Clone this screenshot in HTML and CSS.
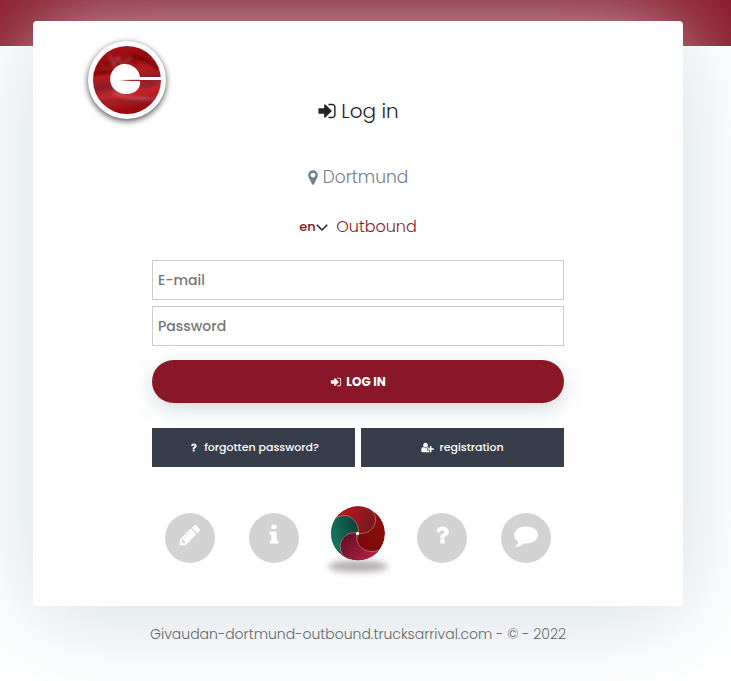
FILE: index.html
```html
<!DOCTYPE html>
<html lang="en">
<head>
    <meta charset="UTF-8">
    <meta name="viewport" content="width=device-width, initial-scale=1.0">
    <title>Log in</title>
    <link rel="stylesheet" href="styles.css">
</head>
<body>
    <svg class="sprite" aria-hidden="true">
        <symbol id="sign-in" viewBox="0 0 1792 1792"><path d="M1312 896q0 26-19 45l-544 544q-19 19-45 19t-45-19-19-45v-288h-448q-26 0-45-19t-19-45v-384q0-26 19-45t45-19h448v-288q0-26 19-45t45-19 45 19l544 544q19 19 19 45zm352-352v704q0 119-84.500 203.500t-203.500 84.500h-320q-13 0-22.500-9.500t-9.500-22.500q0-4-1-20t-.5-26.500 3-23.500 10-19.500 20.500-6.500h320q66 0 113-47t47-113v-704q0-66-47-113t-113-47h-312l-11.500-1-11.500-3-8-5.500-7-9-2-13.500q0-4-1-20t-.5-26.500 3-23.500 10-19.500 20.500-6.500h320q119 0 203.500 84.500t84.500 203.500z"/></symbol>
        <symbol id="question" viewBox="0 0 1792 1792"><path d="M1088 1256v240q0 16-12 28t-28 12h-240q-16 0-28-12t-12-28v-240q0-16 12-28t28-12h240q16 0 28 12t12 28zm316-600q0 54-15.500 101t-35 76.500-55 59.500-57.500 43.500-61 35.500q-41 23-68.500 65t-27.500 67q0 17-12 32.500t-28 15.500h-240q-15 0-25.500-18.500t-10.500-37.500v-45q0-83 65-156.500t143-108.500q59-27 84-56t25-76q0-42-46.500-74t-107.500-32q-65 0-108 29-35 25-107 115-13 16-31 16-12 0-25-8l-164-125q-13-10-15.500-25t5.500-28q160-266 464-266 80 0 161 31t146 83 106 127.500 41 158.500z"/></symbol>
    </svg>

    <div class="top-bar"></div>

    <div class="wrapper">
        <main class="card">
            <svg class="logo" viewBox="0 0 84 84" role="img" aria-label="Givaudan">
                <defs>
                    <linearGradient id="marble" x1="0" y1="0" x2="0.2" y2="1">
                        <stop offset="0" stop-color="#b51218"/>
                        <stop offset="0.3" stop-color="#8e0c10"/>
                        <stop offset="0.45" stop-color="#b81b20"/>
                        <stop offset="0.62" stop-color="#8c1c26"/>
                        <stop offset="0.76" stop-color="#c5262b"/>
                        <stop offset="1" stop-color="#9b0b0e"/>
                    </linearGradient>
                    <filter id="soft"><feGaussianBlur stdDeviation="1.500"/></filter>
                    <clipPath id="disc"><circle cx="42" cy="42" r="34"/></clipPath>
                </defs>
                <circle cx="42" cy="42" r="39" fill="#fff"/>
                <circle cx="42" cy="42" r="34" fill="url(#marble)"/>
                <g clip-path="url(#disc)">
                    <g filter="url(#soft)" fill="none" stroke-linecap="round">
                        <path d="M25 18l4 9 4-8 4 7 8-5" stroke="#b56a78" stroke-width="2" opacity="0.6"/>
                        <path d="M8 36c9-3 14 0 22-3M48 18c8 2 18 5 24 12" stroke="#710609" stroke-width="4" opacity="0.7"/>
                        <path d="M28 54c12 8 26 4 46 8" stroke="#d77078" stroke-width="2" opacity="0.7"/>
                        <path d="M58 49l14-4M16 65c12-5 34 2 50-3" stroke="#7c2634" stroke-width="4" opacity="0.6"/>
                    </g>
                </g>
                <path d="M55 39h21v3H55C56 50 51 56 41 56A15 15 0 1 1 55 39z" fill="#fff"/>
                <path d="M34 42l21-.3v1.600L45 43z" fill="#a8232c"/>
            </svg>

            <h1 class="title"><svg class="icon" aria-hidden="true"><use href="#sign-in"/></svg>Log in</h1>
            <h2 class="place"><svg class="icon marker" viewBox="384 0 1024 1792" aria-hidden="true"><path d="M1152 640q0-106-75-181t-181-75-181 75-75 181 75 181 181 75 181-75 75-181zm256 0q0 109-33 179l-364 774q-16 33-47.500 52t-67.500 19-67.500-19-46.500-52l-365-774q-33-70-33-179 0-212 150-362t362-150 362 150 150 362z"/></svg>Dortmund</h2>

            <div class="options">
                <div class="language">
                    <select aria-label="Language">
                        <option>en</option>
                        <option>de</option>
                    </select>
                    <svg class="chevron" viewBox="0 0 16 16" aria-hidden="true"><path d="M1 5l7 7 7-7"/></svg>
                </div>
                <a href="#" class="direction">Outbound</a>
            </div>

            <form class="login-form">
                <input type="email" placeholder="E-mail" aria-label="E-mail">
                <input type="password" placeholder="Password" aria-label="Password">
                <button type="submit" class="btn-login"><svg class="icon" aria-hidden="true"><use href="#sign-in"/></svg>LOG IN</button>
                <div class="links">
                    <a href="#"><svg class="icon" aria-hidden="true"><use href="#question"/></svg>forgotten password?</a>
                    <a href="#"><svg class="icon user" viewBox="0 0 2048 1792" aria-hidden="true"><path d="M704 896q-159 0-271.500-112.500t-112.500-271.500 112.500-271.500 271.500-112.500 271.500 112.500 112.500 271.500-112.500 271.500-271.500 112.500zm960 128h352q13 0 22.500 9.500t9.500 22.500v192q0 13-9.500 22.500t-22.500 9.500h-352v352q0 13-9.500 22.500t-22.500 9.500h-192q-13 0-22.500-9.500t-9.500-22.500v-352h-352q-13 0-22.500-9.500t-9.500-22.500v-192q0-13 9.500-22.500t22.500-9.500h352v-352q0-13 9.500-22.500t22.500-9.500h192q13 0 22.500 9.500t9.500 22.500v352zm-736 224q0 52 38 90t90 38h256v238q-68 50-171 50h-874q-121 0-194-69t-73-190q0-53 3.500-103.500t14-109 26.500-108.500 43-97.500 62-81 85.500-53.500 111.500-20q19 0 39 17 79 61 154.500 91.500t164.500 30.500 164.500-30.500 154.500-91.500q20-17 39-17 132 0 217 96h-223q-52 0-90 38t-38 90v192z"/></svg>registration</a>
                </div>
            </form>

            <nav class="tools">
                <a href="#" class="round" aria-label="Edit"><svg viewBox="0 0 1792 1792"><path d="M491 1536l91-91-235-235-91 91v107h128v128h107zm523-928q0-22-22-22-10 0-17 7l-542 542q-7 7-7 17 0 22 22 22 10 0 17-7l542-542q7-7 7-17zm-54-192l416 416-832 832h-416v-416zm683 96q0 53-37 90l-166 166-416-416 166-165q36-38 90-38 53 0 91 38l235 234q37 39 37 91z"/></svg></a>
                <a href="#" class="round" aria-label="Info"><svg viewBox="0 0 1792 1792"><path d="M1216 1344v128q0 26-19 45t-45 19h-512q-26 0-45-19t-19-45v-128q0-26 19-45t45-19h64v-384h-64q-26 0-45-19t-19-45v-128q0-26 19-45t45-19h384q26 0 45 19t19 45v576h64q26 0 45 19t19 45zm-128-1152v192q0 26-19 45t-45 19h-256q-26 0-45-19t-19-45v-192q0-26 19-45t45-19h256q26 0 45 19t19 45z"/></svg></a>
                <a href="#" class="swirl" aria-label="Home">
                    <svg viewBox="-5 0 270 270">
                        <defs>
                            <linearGradient id="red" x1="0" y1="0" x2="1" y2="0.3"><stop offset="0.2" stop-color="#c9151f"/><stop offset="1" stop-color="#7c1a20"/></linearGradient>
                            <linearGradient id="dark" x1="0" y1="1" x2="1" y2="0"><stop offset="0" stop-color="#680505"/><stop offset="1" stop-color="#94100f"/></linearGradient>
                            <linearGradient id="green" x1="0" y1="0.6" x2="1" y2="0.2"><stop offset="0" stop-color="#16886b"/><stop offset="1" stop-color="#0b3f38"/></linearGradient>
                            <linearGradient id="plum" x1="0" y1="0" x2="1" y2="0.6"><stop offset="0" stop-color="#570d22"/><stop offset="1" stop-color="#c32248"/></linearGradient>
                            <clipPath id="ball"><circle cx="130" cy="115" r="81"/></clipPath>
                            <filter id="blur" x="-30%" y="-80%" width="160%" height="260%"><feGaussianBlur stdDeviation="9"/></filter>
                        </defs>
                        <ellipse cx="130" cy="214" rx="90" ry="18" fill="#b4b0b2" filter="url(#blur)"/>
                        <g clip-path="url(#ball)" stroke="#c08a84" stroke-width="2">
                            <circle cx="130" cy="115" r="81" fill="url(#dark)" stroke="none"/>
                            <path d="M130 115C175 122 205 70 162 38L150 20H40v60l30-10z" fill="url(#red)"/>
                            <path d="M131 115C134 72 92 44 58 74L30 90v120l70-10 30-84z" fill="url(#green)"/>
                            <path d="M130 115C90 104 58 150 90 188l10 20h110l-12-45C158 182 118 156 128 115z" fill="url(#plum)"/>
                        </g>
                        <path d="M125 111h8v9h-9z" fill="#fff"/>
                    </svg>
                </a>
                <a href="#" class="round" aria-label="Help"><svg><use href="#question"/></svg></a>
                <a href="#" class="round" aria-label="Chat"><svg viewBox="0 0 1792 1792"><path d="M1792 896q0 174-120 321.500t-326 233-450 85.500q-70 0-145-8-198 175-460 242-49 14-114 22-17 2-30.500-9t-17.500-29v-1q-3-4-.5-12t2-10 4.500-9.500l6-9 7-8.500 8-9q7-8 31-34.500t34.500-38 31-39.500 32.500-51 27-59 26-76q-157-89-247.500-220t-90.500-281q0-130 71-248.500t191-204.500 286-136.500 348-50.500q244 0 450 85.500t326 233 120 321.500z"/></svg></a>
            </nav>
        </main>

        <footer>Givaudan-dortmund-outbound.trucksarrival.com - © - 2022</footer>
    </div>
</body>
</html>
```
FILE: styles.css
```css
* {
    box-sizing: border-box;
}
body {
    margin: 0;
    font-family: Poppins, Inter, "Open Sans", sans-serif;
    color: #212529;
    background: #fff;
}
a {
    text-decoration: none;
}
.sprite {
    display: none;
}
.icon {
    width: 1em;
    height: 1em;
    fill: currentColor;
}

.top-bar {
    height: 46px;
    margin-bottom: -46px;
    background: #8a1727;
}
.wrapper {
    padding: 21px 48px 36px 33px;
}
.card {
    position: relative;
    max-width: 650px;
    margin: 0 auto;
    padding: 78px 16px 43px;
    background: #fff;
    border-radius: 4px;
    box-shadow: 0 10px 100px #d2dce2;
    text-align: center;
}
.logo {
    position: absolute;
    top: 17px;
    left: 52px;
    width: 84px;
    height: 84px;
    filter: drop-shadow(0 2px 3px rgba(0, 0, 0, 0.7));
}
.title,
.place,
.options {
    display: flex;
    align-items: center;
    justify-content: center;
    margin: 0;
}
.title {
    gap: 4px;
    font-size: 20px;
    font-weight: 300;
    line-height: 24px;
}
.place {
    gap: 5px;
    margin-top: 42px;
    font-size: 17px;
    font-weight: 300;
    line-height: 24px;
    color: #708090;
}
.marker {
    width: 10px;
}
.options {
    gap: 8px;
    margin-top: 26px;
    line-height: 24px;
}
.language {
    display: flex;
    align-items: center;
}
.language select {
    appearance: none;
    padding: 0;
    border: 0;
    background: none;
    font: 500 13px/20px Poppins, Inter, sans-serif;
    color: #8a1727;
}
.chevron {
    width: 12px;
    height: 12px;
    fill: none;
    stroke: #212529;
    stroke-width: 2;
}
.direction {
    font-size: 16px;
    font-weight: 300;
    color: #8a1727;
}

.login-form {
    display: flex;
    flex-direction: column;
    gap: 6px;
    max-width: 412px;
    margin: 21px auto 0;
}
.login-form input {
    width: 100%;
    height: 40px;
    padding: 0 5px;
    border: 1px solid #ccc;
    font: 500 14px Poppins, Inter, sans-serif;
}
.login-form input::placeholder {
    color: #757575;
}
.btn-login {
    display: flex;
    align-items: center;
    justify-content: center;
    gap: 4px;
    height: 43px;
    margin-top: 8px;
    border: 0;
    border-radius: 22px;
    background: #8a1727;
    color: #fff;
    font: 700 12px Poppins, Inter, sans-serif;
    box-shadow: 0 6px 20px rgba(112, 128, 144, 0.3);
    cursor: pointer;
}
.links {
    display: grid;
    grid-template-columns: 1fr 1fr;
    gap: 6px;
    margin-top: 19px;
}
.links a {
    display: flex;
    align-items: center;
    justify-content: center;
    gap: 5px;
    height: 39px;
    background: #383d4b;
    color: #fff;
    font-size: 11px;
    font-weight: 500;
}
.links .user {
    width: 13px;
}

.tools {
    display: grid;
    grid-template-columns: repeat(5, 84px);
    justify-content: center;
    justify-items: center;
    margin-top: 46px;
}
.round {
    width: 50px;
    height: 50px;
    padding: 10px 13px;
    border-radius: 50%;
    background: #d3d3d3;
}
.round svg {
    display: block;
    width: 24px;
    height: 24px;
    fill: #fff;
}
.swirl {
    height: 50px;
    margin-top: -18px;
}
.swirl svg {
    display: block;
    width: 90px;
    height: 90px;
}
footer {
    margin-top: 18px;
    font-size: 14px;
    font-weight: 300;
    line-height: 21px;
    text-align: center;
    color: #222;
}
```
